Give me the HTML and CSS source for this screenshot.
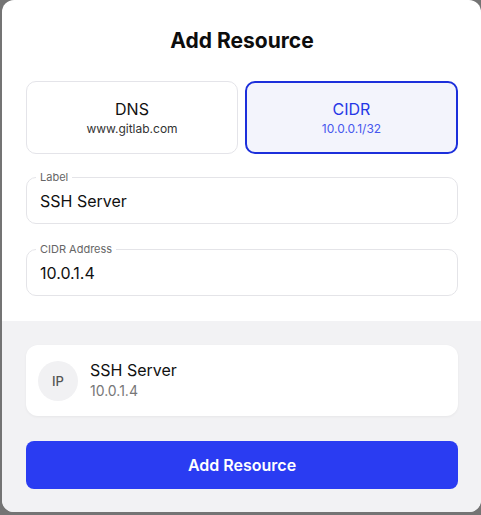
FILE: index.html
```html
<!DOCTYPE html>
<html lang="en">
<head>
    <meta charset="UTF-8">
    <meta name="viewport" content="width=device-width, initial-scale=1.0">
    <title>Add Resource</title>
    <link rel="stylesheet" href="styles.css">
</head>
<body>
    <div class="dialog">
        <div class="dialog-top">
            <h2 class="dialog-title">Add Resource</h2>

            <div class="type-picker">
                <div class="type-card">
                    <div class="type-name">DNS</div>
                    <div class="type-example">www.gitlab.com</div>
                </div>
                <div class="type-card selected">
                    <div class="type-name">CIDR</div>
                    <div class="type-example">10.0.0.1/32</div>
                </div>
            </div>

            <fieldset class="field">
                <legend>Label</legend>
                <div class="field-value">SSH Server</div>
            </fieldset>

            <fieldset class="field">
                <legend>CIDR Address</legend>
                <div class="field-value">10.0.1.4</div>
            </fieldset>
        </div>

        <div class="dialog-bottom">
            <div class="preview">
                <div class="preview-icon">IP</div>
                <div class="preview-text">
                    <div class="preview-name">SSH Server</div>
                    <div class="preview-addr">10.0.1.4</div>
                </div>
            </div>

            <button class="primary-btn">Add Resource</button>
        </div>
    </div>
</body>
</html>
```

FILE: styles.css
```css
* { box-sizing: border-box; }

body {
    margin: 0;
    background: #747474;
    font-family: Inter, "Noto Sans", sans-serif;
    color: #111;
    overflow: hidden;
}

.dialog {
    width: 479px;
    height: 512px;
    margin-left: 2px;
    background: #fff;
    border-radius: 12px;
    overflow: hidden;
    display: flex;
    flex-direction: column;
}

.dialog-top {
    padding: 29px 23px 25px 24px;
}

.dialog-title {
    margin: 0;
    text-align: center;
    font-size: 21px;
    line-height: 24px;
    font-weight: 700;
    color: #0d0d0d;
}

.type-picker {
    display: grid;
    grid-template-columns: 212px 1fr;
    gap: 7px;
    margin-top: 28px;
}

.type-card {
    height: 73px;
    border: 1px solid #e4e4e9;
    border-radius: 10px;
    display: flex;
    flex-direction: column;
    align-items: center;
    justify-content: center;
    gap: 2px;
}
.type-card.selected {
    border: 2px solid #1c2fdb;
    background: #f3f4fc;
}

.type-name {
    font-size: 16px;
    line-height: 20px;
}
.type-example {
    font-size: 12px;
    line-height: 16px;
    color: #333;
}
.selected .type-name { color: #2537e6; }
.selected .type-example { color: #4657ee; }

.field {
    margin: 17px 0 0;
    padding: 0 13px 10px 9px;
    min-width: 0;
    border: 1px solid #e4e4e8;
    border-radius: 10px;
}
.field + .field { margin-top: 19px; }

.field legend {
    padding: 0 4px;
    font-size: 11px;
    line-height: 13px;
    color: #666;
}

.field-value {
    margin-top: 5px;
    padding-left: 4px;
    font-size: 16px;
    line-height: 24px;
    color: #111;
}

.dialog-bottom {
    flex: 1;
    background: #f2f2f4;
    padding: 24px 23px 23px 24px;
}

.preview {
    height: 71px;
    background: #fff;
    border-radius: 12px;
    box-shadow: 0 1px 3px rgba(0,0,0,0.05);
    display: flex;
    align-items: center;
    gap: 12px;
    padding-left: 12px;
}

.preview-icon {
    width: 40px;
    height: 40px;
    border-radius: 50%;
    background: #f1f1f3;
    display: flex;
    align-items: center;
    justify-content: center;
    font-size: 13px;
    font-weight: 500;
    color: #555;
}

.preview-text {
    margin-top: -2px;
}
.preview-name {
    font-size: 16px;
    line-height: 20px;
    color: #111;
}
.preview-addr {
    margin-top: 2px;
    font-size: 14px;
    line-height: 18px;
    color: #777;
}

.primary-btn {
    display: block;
    width: 100%;
    height: 48px;
    margin-top: 25px;
    border: none;
    border-radius: 8px;
    background: #2a3cf2;
    color: #fff;
    font-family: inherit;
    font-size: 16px;
    font-weight: 600;
}
```
